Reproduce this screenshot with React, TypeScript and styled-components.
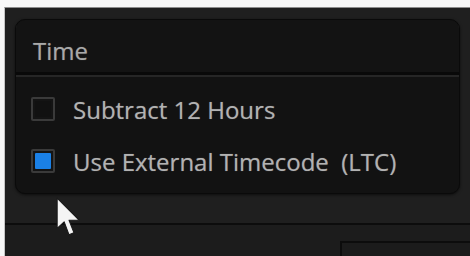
import React from "react";
import styled, { createGlobalStyle } from "styled-components";

const GlobalStyle = createGlobalStyle`
  html, body {
    margin: 0;
    padding: 0;
    background: #f7f7f7;
    overflow: hidden;
  }
  body {
    font-family: "Open Sans", "Noto Sans", sans-serif;
  }
`;

const options = [
  { label: "Subtract 12 Hours", checked: false },
  { label: "Use External Timecode\u00a0 (LTC)", checked: true },
];

const App = () => {
  return (
    <Page>
      <GlobalStyle />
      <Frame>
        <Panel>
          <PanelHeader>Time</PanelHeader>
          <PanelBody>
            {options.map((o) => (
              <OptionRow key={o.label}>
                <CheckBox $checked={o.checked} />
                <OptionLabel>{o.label}</OptionLabel>
              </OptionRow>
            ))}
          </PanelBody>
        </Panel>
        <Footer>
          <FooterBox />
        </Footer>
        <Cursor viewBox="0 0 23 37" width="25" height="40">
          <path
            d="M1 1 L1 29 L7.5 23 L12 35 L16.5 33 L12 21.5 L21.5 21.5 Z"
            fill="#f4f4f4"
            stroke="#1a1a1a"
            strokeWidth="1"
            strokeLinejoin="round"
          />
        </Cursor>
      </Frame>
    </Page>
  );
};

export default App;

const Page = styled.div`
  width: 470px;
  height: 256px;
  padding: 7px 0 0 4px;
  box-sizing: border-box;
  background: #f7f7f7;
`;

const Frame = styled.div`
  position: relative;
  height: 100%;
  display: flex;
  flex-direction: column;
  background: #1f1f1f;
  border-top: 1px solid #8c8c8c;
  border-left: 1px solid #c4c4c4;
  padding: 11px 10px 0 10px;
  box-sizing: border-box;
  overflow: hidden;
`;

const Panel = styled.div`
  flex-shrink: 0;
  width: 445px;
  height: 175px;
  box-sizing: border-box;
  background: #121212;
  border: 1px solid #0a0a0a;
  border-radius: 10px;
  box-shadow: 0 1px 3px rgba(0, 0, 0, 0.6);
  display: flex;
  flex-direction: column;
  overflow: hidden;
`;

const PanelHeader = styled.div`
  flex-shrink: 0;
  height: 55px;
  display: flex;
  align-items: flex-start;
  padding: 14px 0 0 17px;
  box-sizing: border-box;
  font-size: 24px;
  color: #a9a9a9;
  text-shadow: 0 0 1px rgba(170, 170, 170, 0.5);
  background: #131313;
  border-bottom: 3px solid #090909;
  box-shadow: 0 2px 0 #262626;
`;

const PanelBody = styled.div`
  display: flex;
  flex-direction: column;
  gap: 12px;
  padding: 14px 0 0 15px;
`;

const OptionRow = styled.div`
  height: 40px;
  display: flex;
  align-items: center;
  gap: 18px;
`;

const CheckBox = styled.div<{ $checked: boolean }>`
  flex-shrink: 0;
  width: 24px;
  height: 24px;
  box-sizing: border-box;
  border: 2px solid #3a3a3a;
  border-radius: 2px;
  background: #141414;
  padding: 2px;
  &::after {
    content: "";
    display: block;
    width: 100%;
    height: 100%;
    background: ${(p) => (p.$checked ? "#1a80e6" : "#111111")};
    border-radius: 1px;
  }
`;

const OptionLabel = styled.span`
  font-size: 24px;
  color: #b2b2b2;
  text-shadow: 0 0 1px rgba(178, 178, 178, 0.5);
  white-space: nowrap;
`;

const Footer = styled.div`
  margin: 29px -10px 0 -10px;
  flex: 1;
  border-top: 2px solid #0c0c0c;
  background: #1c1c1c;
  display: flex;
  justify-content: flex-end;
  padding-top: 16px;
`;

const FooterBox = styled.div`
  width: 128px;
  height: 30px;
  border-top: 2px solid #0c0c0c;
  border-left: 2px solid #0c0c0c;
  background: #1b1b1b;
`;

const Cursor = styled.svg`
  position: absolute;
  left: 51px;
  top: 189px;
`;
